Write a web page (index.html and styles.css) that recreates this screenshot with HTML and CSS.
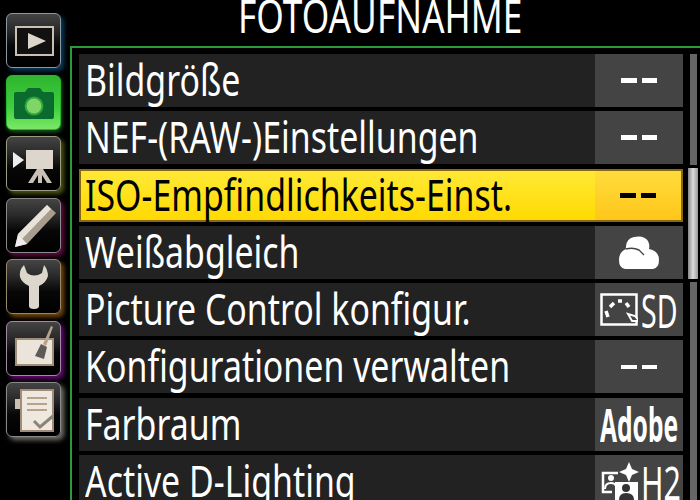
FILE: index.html
```html
<!DOCTYPE html>
<html lang="de">
<head>
  <meta charset="UTF-8">
  <title>Fotoaufnahme</title>
  <link rel="stylesheet" href="styles.css">
</head>
<body>
  <div class="screen">
    <nav class="tabs">
      <div class="tab tab-play">
        <svg viewBox="0 0 50 50" width="50" height="50"><rect x="7" y="11" width="37" height="28" fill="#111" stroke="#c9bfb2" stroke-width="2"/><path d="M19 17 L37 25 L19 33 Z" fill="#dcd5cb"/></svg>
      </div>
      <div class="tab tab-photo">
        <svg viewBox="0 0 50 50" width="50" height="50"><path d="M5 17 Q5 15 7 15 H16 L19 11 H31 L34 15 H43 Q45 15 45 17 V40 Q45 42 43 42 H7 Q5 42 5 40 Z" fill="#0b6a2d"/><circle cx="25" cy="29" r="9.5" fill="#2ba53c"/><circle cx="25" cy="29" r="7.5" fill="#7fd567"/></svg>
      </div>
      <div class="tab tab-movie">
        <svg viewBox="0 0 50 50" width="50" height="50"><path d="M4 13 L15 21 L4 29 Z" fill="#eee"/><rect x="17" y="11" width="27" height="19" fill="#ddd6cc"/><path d="M28 30 H34 L43 44 H38 L33 36 V44 H29 V36 L24 44 H19 Z" fill="#c9c1b6"/></svg>
      </div>
      <div class="tab tab-custom">
        <svg viewBox="0 0 50 50" width="50" height="50"><path d="M38 5 L47 13 L18 44 L6 47 L9 34 Z" fill="#a89c8e"/><path d="M9 34 L18 44 L6 47 Z" fill="#eee"/><path d="M38 5 L42 9 L13 39 L9 34 Z" fill="#e8e2d9"/></svg>
      </div>
      <div class="tab tab-setup">
        <svg viewBox="0 0 50 50" width="50" height="50"><path d="M15 3 Q10 8 11 15 Q13 21 20 24 V44 Q20 47 25 47 Q30 47 30 44 V24 Q37 21 39 14 Q39 8 35 3 L33 11 Q25 16 18 11 Z" fill="#ddd6cc"/></svg>
      </div>
      <div class="tab tab-retouch">
        <svg viewBox="0 0 50 50" width="50" height="50"><rect x="7" y="16" width="37" height="26" fill="#eae4da" stroke="#a08c78" stroke-width="2"/><path d="M42 3 L44 4 L37 23 L34 21 Z" fill="#b5a38d"/><path d="M32 21 L38 24 L35 36 L26 33 Z" fill="#5f5a55"/></svg>
      </div>
      <div class="tab tab-recent">
        <svg viewBox="0 0 50 50" width="50" height="50"><rect x="6" y="14" width="8" height="10" fill="#c9bfb2"/><rect x="12" y="5" width="32" height="41" fill="#eee8de" stroke="#a08c78" stroke-width="2"/><path d="M18 13 H38 M18 19 H38 M18 25 H38" stroke="#b5a38d" stroke-width="2"/><path d="M25 36 L31 42 L44 31" fill="none" stroke="#8d8478" stroke-width="3"/></svg>
      </div>
    </nav>

    <main class="panel">
      <h1 class="title"><span>FOTOAUFNAHME</span></h1>
      <div class="frame">
        <div class="menu">
          <div class="row"><span class="label"><span>Bildgröße</span></span><span class="value"><span class="dashes"><i></i><i></i></span></span></div>
          <div class="row"><span class="label"><span>NEF-(RAW-)Einstellungen</span></span><span class="value"><span class="dashes"><i></i><i></i></span></span></div>
          <div class="row active"><span class="label"><span>ISO-Empfindlichkeits-Einst.</span></span><span class="value"><span class="dashes"><i></i><i></i></span></span></div>
          <div class="row"><span class="label"><span>Weißabgleich</span></span><span class="value">
            <svg viewBox="0 0 40 33" width="40" height="33"><path d="M6 33 Q0 32 0 24 Q0 16 7 13 Q6 3 15 1 Q25 -1 29 5 Q31 9 30 13 Q40 15 40 24 Q40 32 34 33 Z" fill="#fff"/><path d="M7 13 Q14 11 20 14 L25 19" fill="none" stroke="#444" stroke-width="1.4"/></svg>
          </span></div>
          <div class="row"><span class="label"><span>Picture Control konfigur.</span></span><span class="value value-text">
            <svg viewBox="0 0 38 34" width="38" height="34" class="mode-icon"><rect x="1.5" y="1.5" width="35" height="30" fill="none" stroke="#fff" stroke-width="2.5"/><path d="M8 24 L6 18 M10 14 L14 10 M18 8 H22 M26 10 L29 14" stroke="#fff" stroke-width="3.5" fill="none"/><path d="M28 21 L35 23 L39 28 L32 28 Z" fill="#444" stroke="#fff" stroke-width="2"/></svg><b class="mode-text">SD</b></span></div>
          <div class="row"><span class="label"><span>Konfigurationen verwalten</span></span><span class="value"><span class="dashes thin"><i></i><i></i></span></span></div>
          <div class="row"><span class="label"><span>Farbraum</span></span><span class="value value-text"><b class="adobe">Adobe</b></span></div>
          <div class="row"><span class="label"><span>Active D-Lighting</span></span><span class="value value-text">
            <svg viewBox="0 0 42 40" width="42" height="40" class="mode-icon"><path d="M29 0 L32 7 L39 10 L32 13 L29 20 L26 13 L19 10 L26 7 Z" fill="#fff"/><path d="M18 11 H3 V30 H12" fill="none" stroke="#fff" stroke-width="2.5"/><circle cx="11" cy="16" r="3" fill="#fff"/><path d="M5 27 Q5 21 11 21 Q15 21 16 24" fill="none" stroke="#fff" stroke-width="2"/><rect x="15" y="20" width="23" height="20" fill="#fff"/><circle cx="26" cy="26" r="4" fill="#333"/><path d="M19 38 Q19 31 26 31 Q34 31 34 38 Z" fill="#333"/></svg><b class="mode-text mode-h2">H2</b></span></div>
        </div>
        <div class="scroll"><div class="thumb"></div></div>
      </div>
    </main>
  </div>
</body>
</html>
```

FILE: styles.css
```css
html, body { margin: 0; padding: 0; background: #000; }
body { width: 700px; height: 500px; overflow: hidden; font-family: "Noto Sans", "Liberation Sans", sans-serif; color: #fff; }
.screen { display: flex; width: 700px; height: 500px; overflow: hidden; }

/* left tabs */
.tabs { width: 70px; flex: none; padding: 13px 0 0 6px; box-sizing: border-box; display: flex; flex-direction: column; gap: 6.5px; }
.tab { width: 55px; height: 55px; flex: none; box-sizing: border-box; border: 1.5px solid #8a8a8a; border-radius: 6px; background: linear-gradient(#444 0%, #2a2a2a 30%, #070707 60%, #000 100%); display: flex; align-items: center; justify-content: center; }
.tab svg { display: block; }
.tab-play { box-shadow: 3px 3px 4px #0a3a5c; border-color: #8d97a0; }
.tab-photo { background: linear-gradient(#2fb52f, #3ed03c 60%, #7ce868); border-color: #2bb52e; box-shadow: 1px 2px 4px #1c5f20; }
.tab-movie { box-shadow: 3px 3px 4px #4b5212; border-color: #9c9c84; }
.tab-custom { box-shadow: 3px 3px 4px #5c0c3e; }
.tab-setup { box-shadow: 3px 3px 4px #70460c; border-color: #99876a; }
.tab-retouch { box-shadow: 3px 3px 4px #5f0a6c; border-color: #a08aa8; }
.tab-recent { box-shadow: 3px 3px 5px #76716a; }

/* title and menu */
.panel { flex: 1; display: flex; flex-direction: column; min-width: 0; }
.title { margin: 0; height: 46px; flex: none; padding-left: 168px; font-size: 46px; line-height: 30px; font-weight: 400; white-space: nowrap; }
.title span { display: inline-block; transform: scaleX(0.767); transform-origin: left center; }
.frame { flex: none; border-top: 2px solid #2a9a3a; border-left: 2px solid #2a9a3a; display: flex; padding: 6px 0 0 7px; height: 460px; box-sizing: border-box; }
.menu { width: 604px; flex: none; display: flex; flex-direction: column; gap: 4.3px; }
.row { height: 53px; flex: none; display: flex; background: #222; }
.label { flex: 1; min-width: 0; font-size: 44px; line-height: 50px; padding-left: 6px; white-space: nowrap; }
.label span { display: inline-block; transform: scaleX(0.77); transform-origin: left center; }
.value { width: 88px; flex: none; background: #444; display: flex; align-items: center; justify-content: center; }
.dashes { display: flex; gap: 5px; }
.dashes i { display: block; width: 15.5px; height: 5px; background: #fff; }
.dashes.thin i { height: 4px; }
.value-text { justify-content: flex-start; padding-left: 5px; box-sizing: border-box; }
.mode-icon { flex: none; display: block; }
.mode-text { font-size: 46px; font-weight: 400; line-height: 50px; display: inline-block; transform: scaleX(0.62); transform-origin: left center; margin-left: 3px; }
.mode-h2 { margin-left: -1px; transform: scaleX(0.66); }
.adobe { font-size: 46px; font-weight: 700; line-height: 50px; display: inline-block; transform: scaleX(0.535); transform-origin: left center; }

.row.active { background: linear-gradient(#ffe93a, #ffe21a 50%, #ffd800); outline: 2px solid #8a6a10; outline-offset: -2px; color: #000; }
.row.active .value { background: linear-gradient(#ffdc3c, #ffc61a); margin: 2px 2px 2px 0; width: 86px; }
.row.active .dashes i { background: #000; }

/* scrollbar */
.scroll { width: 7px; margin-left: 7px; background: #666; height: 500px; position: relative; }
.thumb { position: absolute; left: -2px; top: 114px; width: 10px; height: 111px; background: linear-gradient(90deg, #888, #ddd 50%, #999); box-shadow: 0 -3px 0 #000, 0 3px 0 #000; }
```
